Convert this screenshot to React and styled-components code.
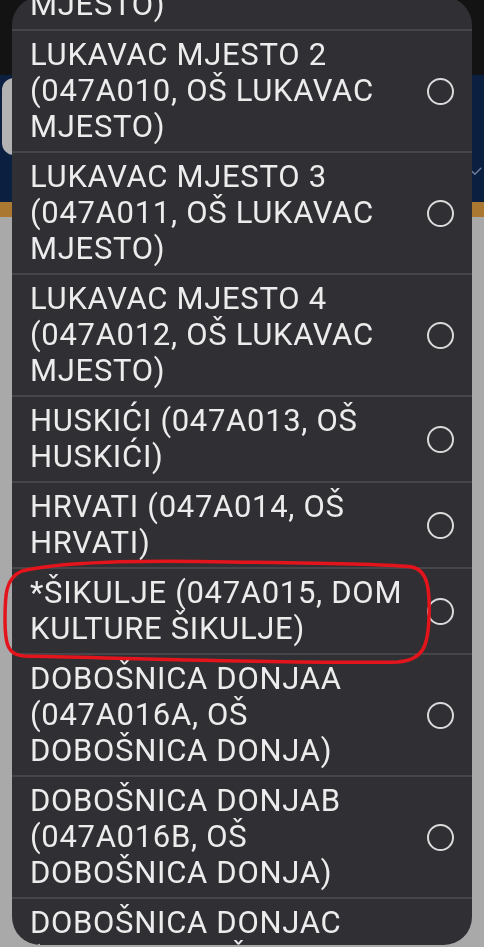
import React from 'react';
import styled, { createGlobalStyle } from 'styled-components';
import { Check } from 'lucide-react';

const Global = createGlobalStyle`
  html, body {
    margin: 0;
    padding: 0;
    height: 100%;
    overflow: hidden;
    background: #f2f2f2;
    font-family: Roboto, "Noto Sans", "Liberation Sans", sans-serif;
  }
`;

const Page = styled.div`
  display: flex;
  flex-direction: column;
  height: 947px;
`;

const AppBar = styled.div`
  height: 75px;
  background: #1c1c1c;
`;

const Header = styled.div`
  height: 127px;
  background: #112d5e;
  display: flex;
  flex-direction: column;
  padding: 3px 0 0 2px;
  box-sizing: border-box;
`;

const Card = styled.div`
  width: 440px;
  height: 77px;
  background: #ffffff;
  border-radius: 12px;
`;

const CheckRow = styled.div`
  display: flex;
  justify-content: flex-end;
  padding: 10px 1px 0 0;
  color: #a6b8dc;
`;

const Stripe = styled.div`
  height: 15px;
  background: #f4ad45;
`;

const Content = styled.div`
  flex: 1;
  background: #f2f2f2;
`;

const Scrim = styled.div`
  position: fixed;
  inset: 0;
  background: rgba(0, 0, 0, 0.3);
`;

const Dialog = styled.div`
  position: fixed;
  top: -3px;
  left: 12px;
  right: 12px;
  bottom: 2px;
  background: #303034;
  border-radius: 28px;
  overflow: hidden;
`;

const List = styled.ul`
  list-style: none;
  margin: -90px 0 0;
  padding: 0;
`;

const Row = styled.li`
  display: flex;
  align-items: center;
  padding: 6px 18px 6px 18px;
  border-top: 2px solid #45454a;
`;

const Label = styled.span`
  flex: 1;
  font-size: 31px;
  line-height: 36px;
  color: #ececec;
  letter-spacing: 0.7px;
`;

const Radio = styled.span`
  flex: none;
  width: 27px;
  height: 27px;
  box-sizing: border-box;
  border: 2.5px solid #dadada;
  border-radius: 50%;
  margin-left: 12px;
`;

const Mark = styled.svg`
  position: fixed;
  inset: 0;
  pointer-events: none;
`;

const items = [
  'LUKAVAC MJESTO 1 (047A009, OŠ LUKAVAC MJESTO)',
  'LUKAVAC MJESTO 2 (047A010, OŠ LUKAVAC MJESTO)',
  'LUKAVAC MJESTO 3 (047A011, OŠ LUKAVAC MJESTO)',
  'LUKAVAC MJESTO 4 (047A012, OŠ LUKAVAC MJESTO)',
  'HUSKIĆI (047A013, OŠ HUSKIĆI)',
  'HRVATI (047A014, OŠ HRVATI)',
  '*ŠIKULJE (047A015, DOM KULTURE ŠIKULJE)',
  'DOBOŠNICA DONJAA (047A016A, OŠ DOBOŠNICA DONJA)',
  'DOBOŠNICA DONJAB (047A016B, OŠ DOBOŠNICA DONJA)',
  'DOBOŠNICA DONJAC (047A016C, OŠ DOBOŠNICA DONJA)',
];

export default function App() {
  return (
    <>
      <Global />
      <Page>
        <AppBar />
        <Header>
          <Card />
          <CheckRow>
            <Check size={13} strokeWidth={2.5} />
          </CheckRow>
        </Header>
        <Stripe />
        <Content />
      </Page>
      <Scrim />
      <Dialog>
        <List>
          {items.map((t) => (
            <Row key={t}>
              <Label>{t}</Label>
              <Radio />
            </Row>
          ))}
        </List>
      </Dialog>
      <Mark width="484" height="947" viewBox="0 0 484 947">
        <path
          d="M 22 571 C 60 562, 140 560, 230 562 C 320 563, 390 564, 412 567 C 428 570, 430 590, 429 618 C 428 645, 424 660, 398 662 C 300 664, 120 658, 24 656 C 8 655, 5 645, 5 620 C 5 596, 5 578, 22 571 Z"
          fill="none"
          stroke="#e3141c"
          strokeWidth="3.5"
          strokeLinejoin="round"
        />
      </Mark>
    </>
  );
}
